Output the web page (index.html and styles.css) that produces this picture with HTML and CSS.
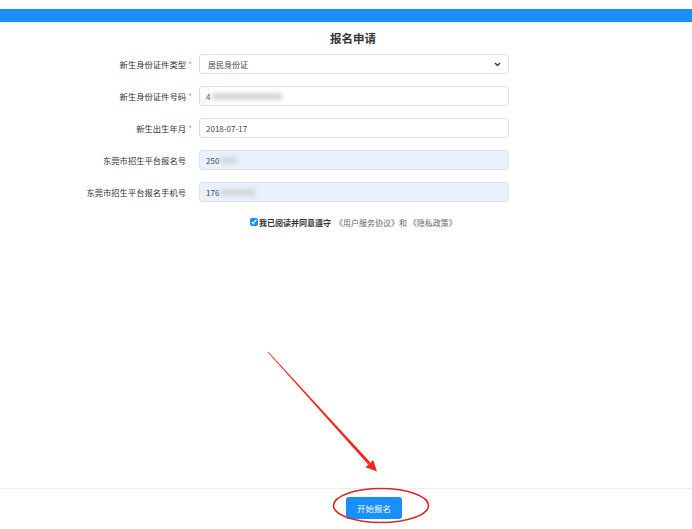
FILE: index.html
```html
<!DOCTYPE html>
<html lang="zh-CN">
<head>
    <meta charset="UTF-8">
    <meta name="viewport" content="width=device-width, initial-scale=1.0">
    <title>报名申请</title>
    <link rel="stylesheet" href="styles.css">
</head>
<body>
    <div class="top-bar"></div>
    <div class="main">
        <h2 class="title">报名申请</h2>
        <form class="apply-form" id="applyForm">
            <label class="form-label">新生身份证件类型<span class="star">*</span></label>
            <div class="field select-field">
                居民身份证
                <svg class="chevron" width="7" height="5" viewBox="0 0 7 5"><path d="M1 1 L3.5 3.5 L6 1" fill="none" stroke="#333" stroke-width="1.3"/></svg>
            </div>

            <label class="form-label">新生身份证件号码<span class="star">*</span></label>
            <div class="field">4<span class="blur" style="width: 70px"></span></div>

            <label class="form-label">新生出生年月<span class="star">*</span></label>
            <div class="field">2018-07-17</div>

            <label class="form-label">东莞市招生平台报名号<span class="star"></span></label>
            <div class="field filled">250<span class="blur" style="width: 16px"></span></div>

            <label class="form-label">东莞市招生平台报名手机号<span class="star"></span></label>
            <div class="field filled">176<span class="blur" style="width: 34px"></span></div>

            <div class="agree">
                <input type="checkbox" checked>
                <b>我已阅读并同意遵守</b>
                <span class="agree-links">《用户服务协议》和 《隐私政策》</span>
            </div>
        </form>
    </div>
    <div class="footer">
        <button type="button" class="start-btn">开始报名</button>
    </div>

    <!-- 标注：箭头和圈 -->
    <svg class="marks" width="692" height="529" viewBox="0 0 692 529">
        <polygon points="267.7,352.3 268.3,351.7 370.4,462.6 368.2,464.6" fill="#f0261c"/>
        <polygon points="365.4,467.2 373.2,460.0 377,471.5" fill="#f0261c"/>
        <ellipse cx="381" cy="505.5" rx="47.5" ry="17" fill="none" stroke="#d42a22" stroke-width="1.6"/>
    </svg>
</body>
</html>
```

FILE: styles.css
```css
body {
    margin: 0;
    height: 100vh;
    display: flex;
    flex-direction: column;
    font-family: "Noto Sans CJK SC", "Liberation Sans", sans-serif;
    color: #333;
    background: #fff;
    position: relative;
    overflow: hidden;
}

.top-bar {
    margin-top: 9px;
    height: 13px;
    background-color: #1890ff;
}

.main {
    flex: 1;
}

.title {
    margin: 8px 0 0;
    padding-left: 14px;
    text-align: center;
    font-size: 11.5px;
    line-height: 16px;
    font-weight: bold;
    color: #333;
}

.apply-form {
    margin: 8px 0 0 75px;
    display: grid;
    grid-template-columns: 124px 310px;
    grid-auto-rows: 20px;
    row-gap: 12px;
}

.form-label {
    display: flex;
    justify-content: flex-end;
    align-items: center;
    font-size: 8.3px;
    color: #333;
}

.star {
    width: 8px;
    padding-right: 5px;
    text-align: center;
    color: #f56c6c;
    font-size: 8px;
}

.field {
    box-sizing: border-box;
    height: 20px;
    border: 1px solid #ddd;
    border-radius: 3px;
    padding: 0 6px;
    display: flex;
    align-items: center;
    font-size: 8px;
    color: #444;
}

.field.filled {
    background-color: #e8f0fe;
    border-color: #dde3ec;
}

.select-field {
    justify-content: space-between;
    padding-left: 8px;
    padding-right: 7px;
}

.blur {
    display: inline-block;
    height: 7px;
    margin-left: 2px;
    background-color: #d3d6db;
    filter: blur(2px);
}

.agree {
    grid-column: 2;
    margin-left: 51px;
    margin-top: 1px;
    display: flex;
    align-items: center;
    height: 14px;
    font-size: 8px;
    white-space: nowrap;
}

.agree input {
    width: 8px;
    height: 8px;
    margin: 0 1px 0 0;
    accent-color: #1890ff;
}

.agree b {
    color: #333;
}

.agree-links {
    margin-left: 4px;
    color: #666;
}

.footer {
    border-top: 1px solid #eee;
    padding: 8px 0 10px 56px;
    display: flex;
    justify-content: center;
}

.start-btn {
    width: 56px;
    height: 22px;
    padding: 0;
    border: none;
    border-radius: 3px;
    background-color: #1890ff;
    color: #fff;
    font-family: inherit;
    font-size: 8.5px;
    cursor: pointer;
}

.marks {
    position: absolute;
    left: 0;
    top: 0;
    pointer-events: none;
}
```
